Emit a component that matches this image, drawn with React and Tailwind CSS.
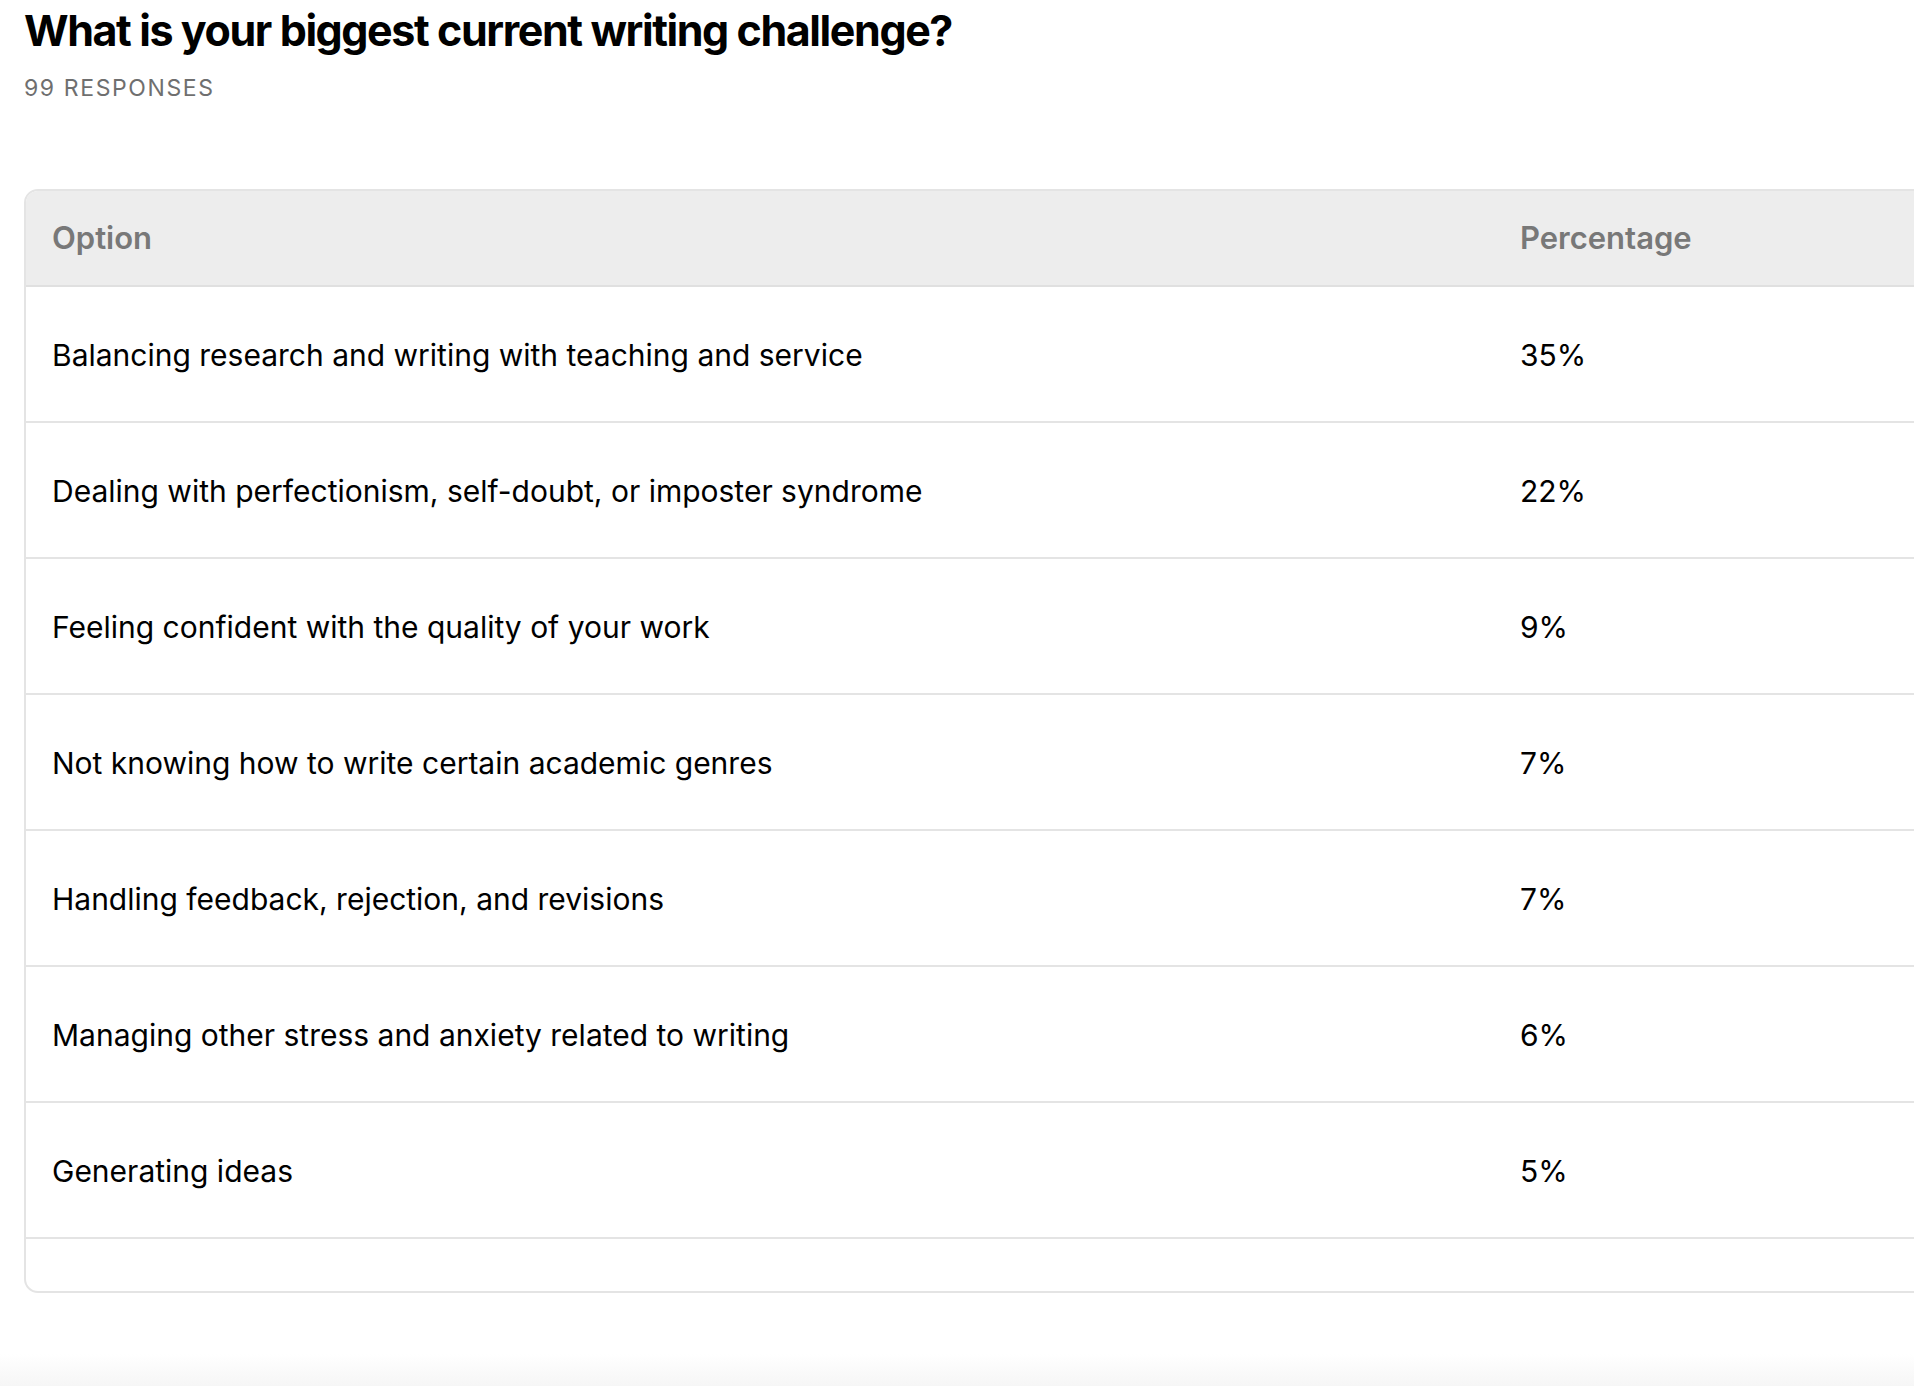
import React from "react";

const rows = [
  ["Balancing research and writing with teaching and service", "35%"],
  ["Dealing with perfectionism, self-doubt, or imposter syndrome", "22%"],
  ["Feeling confident with the quality of your work", "9%"],
  ["Not knowing how to write certain academic genres", "7%"],
  ["Handling feedback, rejection, and revisions", "7%"],
  ["Managing other stress and anxiety related to writing", "6%"],
  ["Generating ideas", "5%"],
];

export default function App() {
  return (
    <div
      className="relative w-[1914px] h-[1386px] overflow-hidden bg-white text-black"
      style={{ fontFamily: "Inter, 'Noto Sans', sans-serif" }}
    >
      <div className="pl-6 pt-[5px]">
        <h1 className="text-[43px] leading-[50px] font-bold tracking-[-0.033em] text-black">
          What is your biggest current writing challenge?
        </h1>
        <div className="mt-[18px] text-[23px] leading-[30px] tracking-[0.07em] text-[#6f6f6f] uppercase">
          99 Responses
        </div>
      </div>

      <div className="ml-6 mt-[86px] w-[2100px] rounded-[14px] border-2 border-[#e4e4e4] overflow-hidden">
        <div className="flex h-[96px] items-center bg-[#ededed] border-b-2 border-[#e0e0e0]">
          <div className="w-[1494px] pl-[26px] text-[31px] font-semibold text-[#787878]">Option</div>
          <div className="text-[31px] font-semibold text-[#787878]">Percentage</div>
        </div>
        {rows.map(([label, pct]) => (
          <div key={label} className="flex h-[136px] items-center border-b-2 border-[#e4e4e4] pt-[2px]">
            <div className="w-[1494px] pl-[26px] text-[30px] text-black">{label}</div>
            <div className="text-[30px] text-black">{pct}</div>
          </div>
        ))}
        <div className="h-[52px]" />
      </div>

      <div className="absolute bottom-0 left-0 right-0 h-[32px] bg-gradient-to-b from-white to-[#f6f6f6]" />
    </div>
  );
}
